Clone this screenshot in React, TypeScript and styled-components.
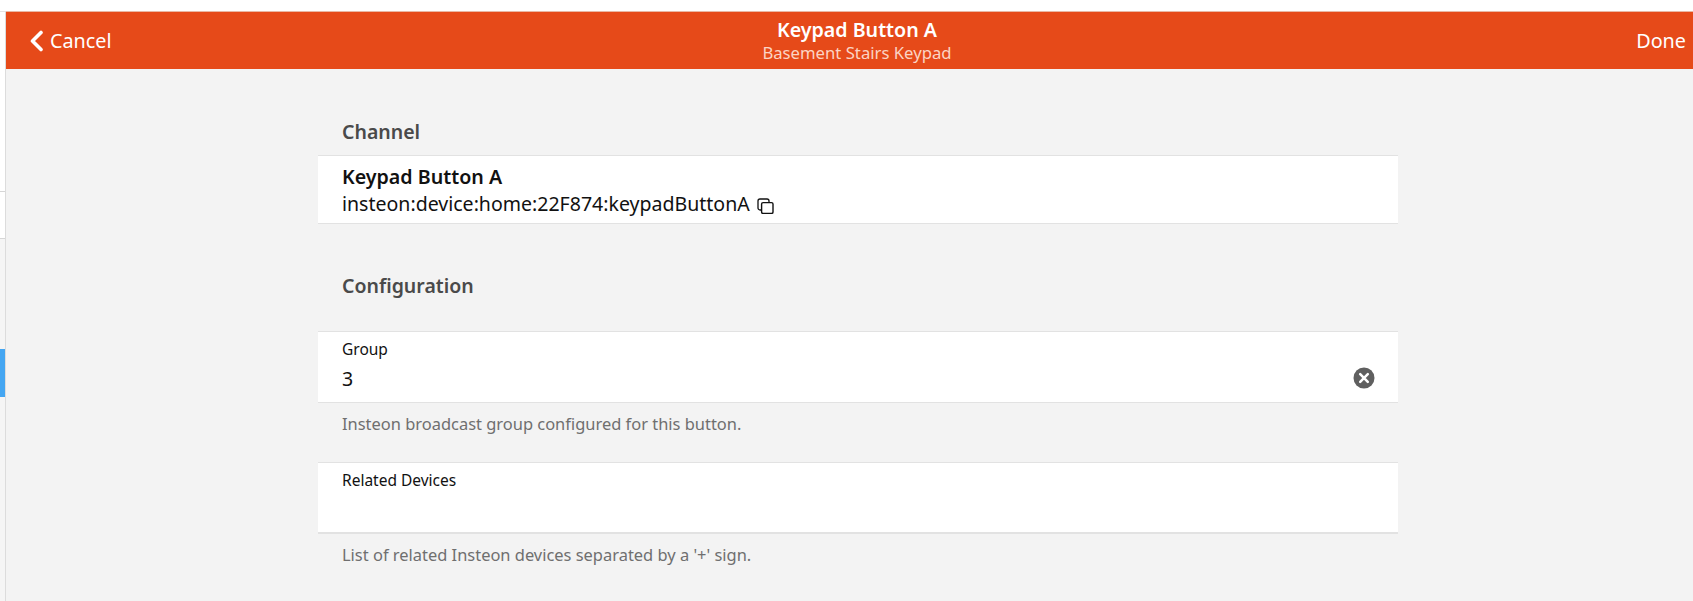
import React from "react";
import styled, { createGlobalStyle } from "styled-components";

const Global = createGlobalStyle`
  html, body { margin: 0; padding: 0; width: 1693px; height: 601px; overflow: hidden; background: #fff; }
  #root { width: 1693px; height: 601px; }
  * { box-sizing: border-box; }
`;

const Screen = styled.div`
  display: flex;
  width: 1693px;
  height: 601px;
  overflow: hidden;
  padding-top: 11px;
  font-family: "Noto Sans", "Open Sans", sans-serif;
`;

const Peek = styled.div`
  flex: 0 0 6px;
  display: flex;
  flex-direction: column;
  border-right: 1px solid #dcdcdc;
  border-top: 1px solid #e4e4e4;
  background: #fff;
`;

const PeekRow = styled.div<{ $h: number; $bg: string; $line?: string }>`
  flex: 0 0 ${(p) => p.$h}px;
  background: ${(p) => p.$bg};
  border-bottom: ${(p) => (p.$line ? `1px solid ${p.$line}` : "none")};
`;

const Panel = styled.div`
  flex: 0 0 1704px;
  display: flex;
  flex-direction: column;
  background: #f3f3f3;
  border-top: 1px solid #e9b8a4;
`;

const Header = styled.header`
  flex: 0 0 57px;
  display: grid;
  grid-template-columns: 1fr auto 1fr;
  align-items: center;
  padding: 0 24px 0 22px;
  background: #e64a19;
  color: #fff;
`;

const BackLink = styled.div`
  display: flex;
  align-items: center;
  gap: 5px;
  font-size: 19.8px;
  line-height: 26px;
`;

const DoneLink = styled.div`
  justify-self: end;
  font-size: 19.8px;
  line-height: 26px;
`;

const TitleBlock = styled.div`
  display: flex;
  flex-direction: column;
  align-items: center;
`;

const Title = styled.div`
  font-size: 19.65px;
  font-weight: 600;
  line-height: 24px;
`;

const Subtitle = styled.div`
  font-size: 16.7px;
  line-height: 22px;
  color: #fbd4c4;
`;

const Content = styled.main`
  width: 1080px;
  margin-left: 312px;
  display: flex;
  flex-direction: column;
`;

const SectionTitle = styled.h2<{ $top: number; $bottom: number }>`
  margin: ${(p) => p.$top}px 0 ${(p) => p.$bottom}px;
  padding-left: 24px;
  font-size: 19.5px;
  font-weight: 600;
  line-height: 26px;
  color: #4a4a4a;
`;

const Card = styled.section`
  height: 69px;
  padding: 7px 24px 0;
  background: #fff;
  border-top: 1px solid #e2e2e2;
  border-bottom: 1px solid #e2e2e2;
`;

const ChannelName = styled.div`
  font-size: 19.65px;
  font-weight: 600;
  line-height: 27px;
  color: #111;
`;

const ChannelUri = styled.div`
  display: flex;
  align-items: center;
  gap: 7px;
  font-size: 19.55px;
  line-height: 27px;
  color: #111;
`;

const Field = styled.section<{ $thick?: boolean }>`
  height: 72px;
  padding: 7px 24px 0;
  display: flex;
  flex-direction: column;
  background: #fff;
  border-top: 1px solid #e2e2e2;
  border-bottom: ${(p) => (p.$thick ? 2 : 1)}px solid #e2e2e2;
`;

const FieldLabel = styled.div`
  font-size: 15.5px;
  line-height: 21px;
  color: #111;
`;

const FieldRow = styled.div`
  display: flex;
  align-items: center;
  justify-content: space-between;
  height: 30px;
  margin-top: 3px;
  font-size: 19.5px;
  color: #111;
`;

const ClearButton = styled.span`
  display: flex;
  width: 22px;
  height: 22px;
  margin-right: -1px;
`;

const Help = styled.p`
  margin: 0;
  padding: 10px 24px 0;
  font-size: 16.45px;
  line-height: 22px;
  color: #6f6f6f;
  height: 59px;
`;

const ChevronLeft = () => (
  <svg width="17" height="22" viewBox="0 0 17 22" fill="none" aria-hidden="true">
    <path d="M13 2.5 L4.5 11 L13 19.5" stroke="#fff" strokeWidth="3.6" strokeLinecap="round" strokeLinejoin="round" />
  </svg>
);

const CopyIcon = () => (
  <svg width="17" height="16" viewBox="0 0 17 16" fill="none" aria-hidden="true" style={{ marginTop: 5 }}>
    <path d="M4 12 H3 A2 2 0 0 1 1 10 V3 A2 2 0 0 1 3 1 H10 A2 2 0 0 1 12 3 V4" stroke="#111" strokeWidth="1.3" />
    <rect x="4.6" y="4.6" width="11.4" height="10.8" rx="1.5" fill="#fff" stroke="#111" strokeWidth="1.4" />
  </svg>
);

const ClearIcon = () => (
  <svg width="22" height="22" viewBox="0 0 22 22" aria-hidden="true">
    <circle cx="11" cy="11" r="10.5" fill="#5f5f5f" />
    <path d="M7.2 7.2 L14.8 14.8 M14.8 7.2 L7.2 14.8" stroke="#fff" strokeWidth="2.5" strokeLinecap="round" />
  </svg>
);

export default function App() {
  return (
    <>
      <Global />
      <Screen>
        <Peek>
          <PeekRow $h={180} $bg="#fff" $line="#d6d6d6" />
          <PeekRow $h={47} $bg="#fff" $line="#d6d6d6" />
          <PeekRow $h={110} $bg="#f5f5f5" />
          <PeekRow $h={48} $bg="#44a6f2" />
          <PeekRow $h={204} $bg="#f5f5f5" />
        </Peek>
        <Panel>
          <Header>
            <BackLink>
              <ChevronLeft />
              Cancel
            </BackLink>
            <TitleBlock>
              <Title>Keypad Button A</Title>
              <Subtitle>Basement Stairs Keypad</Subtitle>
            </TitleBlock>
            <DoneLink>Done</DoneLink>
          </Header>
          <Content>
            <SectionTitle $top={50} $bottom={10}>Channel</SectionTitle>
            <Card>
              <ChannelName>Keypad Button A</ChannelName>
              <ChannelUri>
                insteon:device:home:22F874:keypadButtonA
                <CopyIcon />
              </ChannelUri>
            </Card>
            <SectionTitle $top={49} $bottom={32}>Configuration</SectionTitle>
            <Field>
              <FieldLabel>Group</FieldLabel>
              <FieldRow>
                3
                <ClearButton>
                  <ClearIcon />
                </ClearButton>
              </FieldRow>
            </Field>
            <Help>Insteon broadcast group configured for this button.</Help>
            <Field $thick>
              <FieldLabel>Related Devices</FieldLabel>
            </Field>
            <Help>List of related Insteon devices separated by a '+' sign.</Help>
          </Content>
        </Panel>
      </Screen>
    </>
  );
}
